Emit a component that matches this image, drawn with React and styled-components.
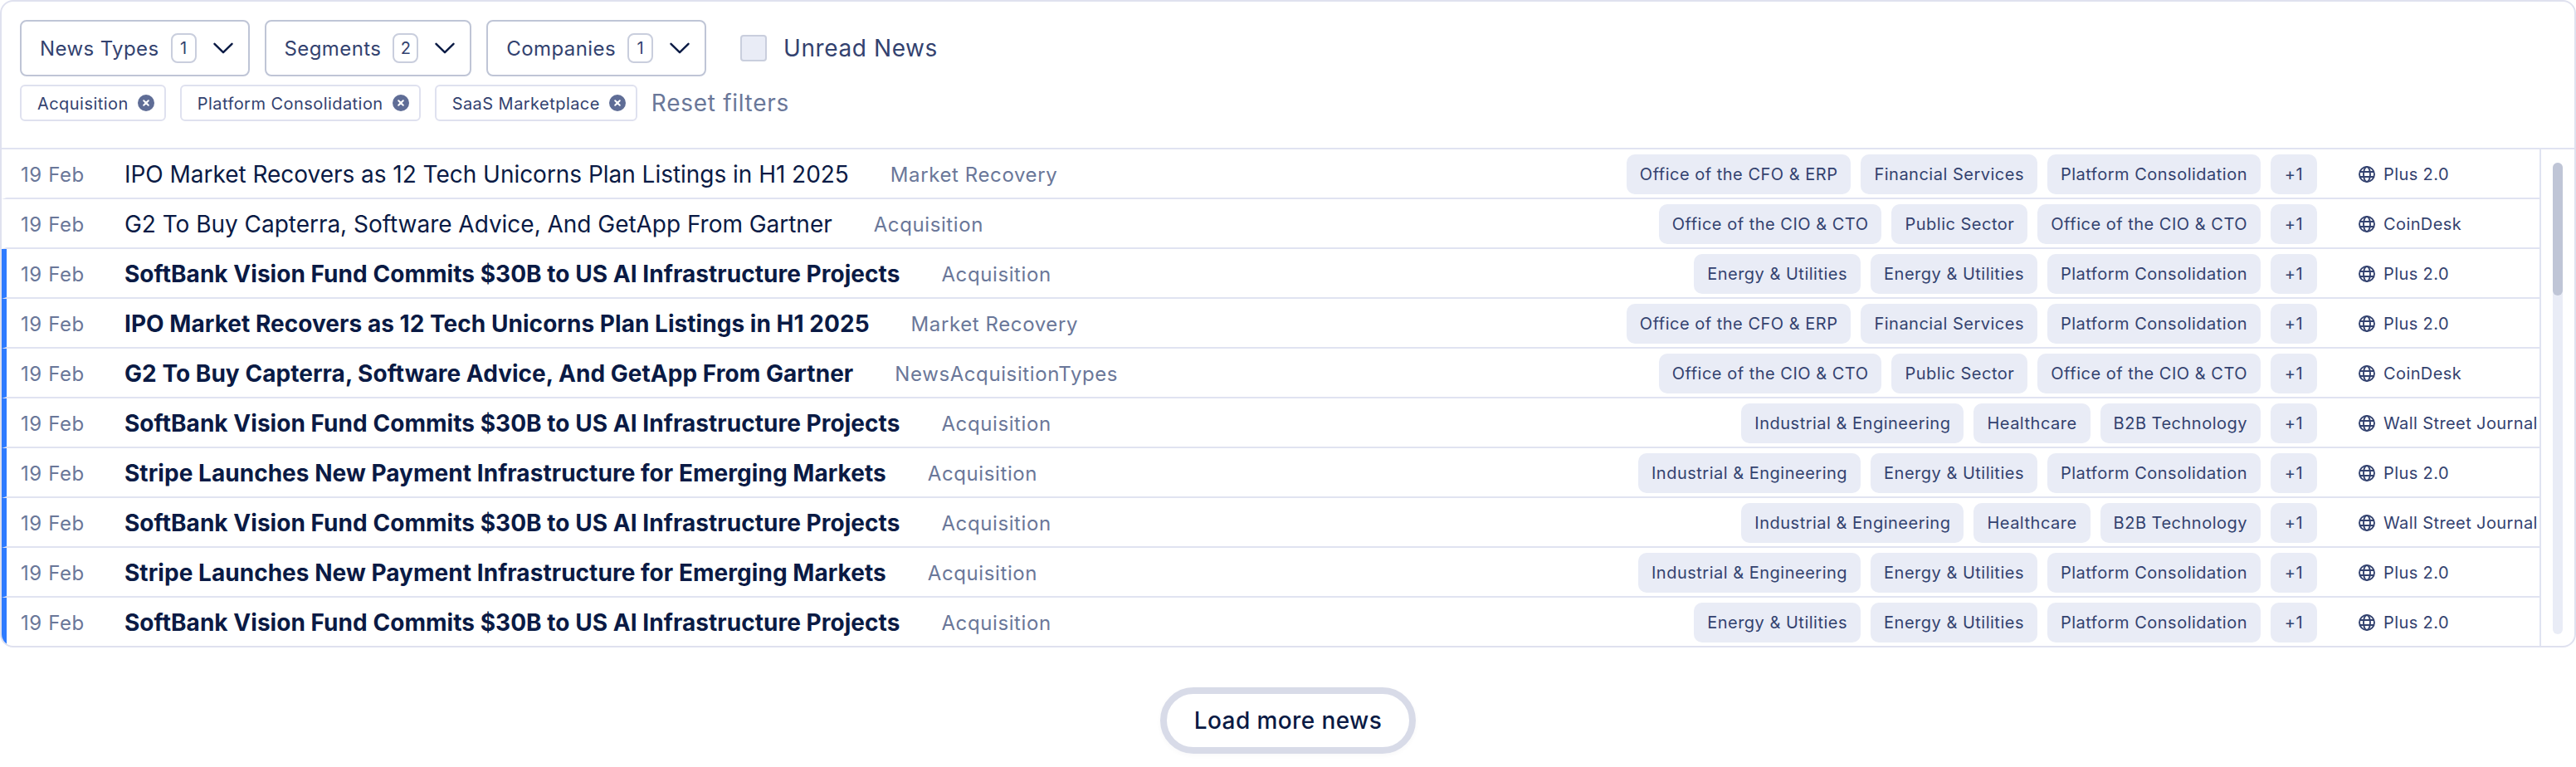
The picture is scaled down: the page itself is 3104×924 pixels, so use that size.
import styled, { createGlobalStyle } from "styled-components";

const GlobalStyle = createGlobalStyle`
  html, body { margin: 0; padding: 0; background: #fff; }
  body { font-family: Inter, "Noto Sans", sans-serif; }
  * { box-sizing: border-box; }
`;

const filters = [
  { label: "News Types", count: 1 },
  { label: "Segments", count: 2 },
  { label: "Companies", count: 1 },
];

const chips = ["Acquisition", "Platform Consolidation", "SaaS Marketplace"];

const softbankEnergy = ["Energy & Utilities", "Energy & Utilities", "Platform Consolidation"];
const softbankIndustrial = ["Industrial & Engineering", "Healthcare", "B2B Technology"];
const stripeTags = ["Industrial & Engineering", "Energy & Utilities", "Platform Consolidation"];
const ipoTags = ["Office of the CFO & ERP", "Financial Services", "Platform Consolidation"];
const g2Tags = ["Office of the CIO & CTO", "Public Sector", "Office of the CIO & CTO"];

const IPO = "IPO Market Recovers as 12 Tech Unicorns Plan Listings in H1 2025";
const G2 = "G2 To Buy Capterra, Software Advice, And GetApp From Gartner";
const SOFTBANK = "SoftBank Vision Fund Commits $30B to US AI Infrastructure Projects";
const STRIPE = "Stripe Launches New Payment Infrastructure for Emerging Markets";

const news = [
  { title: IPO, type: "Market Recovery", tags: ipoTags, source: "Plus 2.0" },
  { title: G2, type: "Acquisition", tags: g2Tags, source: "CoinDesk" },
  { title: SOFTBANK, type: "Acquisition", tags: softbankEnergy, source: "Plus 2.0", unread: true },
  { title: IPO, type: "Market Recovery", tags: ipoTags, source: "Plus 2.0", unread: true },
  { title: G2, type: "NewsAcquisitionTypes", tags: g2Tags, source: "CoinDesk", unread: true },
  { title: SOFTBANK, type: "Acquisition", tags: softbankIndustrial, source: "Wall Street Journal", unread: true },
  { title: STRIPE, type: "Acquisition", tags: stripeTags, source: "Plus 2.0", unread: true },
  { title: SOFTBANK, type: "Acquisition", tags: softbankIndustrial, source: "Wall Street Journal", unread: true },
  { title: STRIPE, type: "Acquisition", tags: stripeTags, source: "Plus 2.0", unread: true },
  { title: SOFTBANK, type: "Acquisition", tags: softbankEnergy, source: "Plus 2.0", unread: true },
];

const Chevron = () => (
  <svg width="24" height="24" viewBox="0 0 24 24" fill="none" stroke="#0a1a44" strokeWidth="2.4" strokeLinecap="round" strokeLinejoin="round">
    <path d="M1.5 6.8L12 17.2L22.5 6.8" />
  </svg>
);

const CloseDot = () => (
  <svg width="20" height="20" viewBox="0 0 20 20">
    <circle cx="10" cy="10" r="10" fill="#5f6d96" />
    <path d="M7.2 7.2l5.6 5.6M12.8 7.2l-5.6 5.6" stroke="#fff" strokeWidth="2" strokeLinecap="round" />
  </svg>
);

const Globe = () => (
  <svg width="20" height="20" viewBox="0 0 20 20" fill="none" stroke="#33426f" strokeWidth="1.9">
    <circle cx="10" cy="10" r="9" />
    <ellipse cx="10" cy="10" rx="4" ry="9" />
    <path d="M1.6 7h16.8M1.6 13h16.8" />
  </svg>
);

const App = () => {
  return (
    <Page>
      <GlobalStyle />
      <Card>
        <FilterBar>
          <FilterRow>
            {filters.map((f) => (
              <FilterButton key={f.label}>
                <span>{f.label}</span>
                <Count>{f.count}</Count>
                <Chevron />
              </FilterButton>
            ))}
            <UnreadToggle>
              <CheckBox />
              <span>Unread News</span>
            </UnreadToggle>
          </FilterRow>
          <ChipRow>
            {chips.map((c) => (
              <Chip key={c}>
                <span>{c}</span>
                <CloseDot />
              </Chip>
            ))}
            <ResetLink>Reset filters</ResetLink>
          </ChipRow>
        </FilterBar>
        <ListWrap>
          <List>
            {news.map((n, i) => (
              <Row key={i} $unread={n.unread}>
                <DateCell>19 Feb</DateCell>
                <Title $unread={n.unread}>{n.title}</Title>
                <NewsType>{n.type}</NewsType>
                <Tags>
                  {n.tags.map((t, j) => (
                    <Tag key={j}>{t}</Tag>
                  ))}
                  <MoreTag>+1</MoreTag>
                </Tags>
                <Source>
                  <Globe />
                  <SourceName>{n.source}</SourceName>
                </Source>
              </Row>
            ))}
          </List>
          <ScrollColumn>
            <ScrollTrack>
              <ScrollThumb />
            </ScrollTrack>
          </ScrollColumn>
        </ListWrap>
      </Card>
      <LoadMoreWrap>
        <LoadMore>Load more news</LoadMore>
      </LoadMoreWrap>
    </Page>
  );
};

export default App;

const Page = styled.div`
  width: 3104px;
  height: 924px;
  overflow: hidden;
`;

const Card = styled.div`
  height: 780px;
  border: 2px solid #dfe1ef;
  border-radius: 16px;
  overflow: hidden;
  display: flex;
  flex-direction: column;
`;

const FilterBar = styled.div`
  height: 178px;
  flex-shrink: 0;
  border-bottom: 2px solid #e0e3f1;
  padding: 22px 22px 0;
`;

const FilterRow = styled.div`
  display: flex;
  align-items: center;
  gap: 18px;
`;

const FilterButton = styled.div`
  height: 68px;
  display: flex;
  align-items: center;
  padding: 0 18px 0 22px;
  border: 2px solid #bfc5d6;
  border-radius: 8px;
  color: #33426f;
  font-size: 24px;
  letter-spacing: 0.4px;
  svg { margin-left: 20px; }
`;

const Count = styled.span`
  width: 31px;
  height: 36px;
  margin-left: 14px;
  display: flex;
  align-items: center;
  justify-content: center;
  border: 2px solid #c9cedd;
  border-radius: 8px;
  font-size: 20px;
  letter-spacing: 0;
`;

const UnreadToggle = styled.label`
  display: flex;
  align-items: center;
  gap: 20px;
  margin-left: 23px;
  color: #33426f;
  font-size: 28px;
  letter-spacing: 0.6px;
`;

const CheckBox = styled.span`
  width: 32px;
  height: 32px;
  background: #e9ecf6;
  border: 2px solid #c9cedd;
  border-radius: 4px;
`;

const ChipRow = styled.div`
  display: flex;
  align-items: center;
  gap: 17px;
  margin-top: 10px;
`;

const Chip = styled.div`
  height: 44px;
  display: flex;
  align-items: center;
  gap: 11px;
  padding: 2px 12px 0 19px;
  border: 2px solid #dfe1ef;
  border-radius: 6px;
  color: #33426f;
  font-size: 20px;
  letter-spacing: 0.45px;
  svg { margin-top: -2px; }
`;

const ResetLink = styled.span`
  color: #6a7799;
  font-size: 28px;
  letter-spacing: 0.7px;
`;

const ListWrap = styled.div`
  flex: 1;
  display: flex;
  min-height: 0;
`;

const List = styled.div`
  width: 3058px;
  flex-shrink: 0;
`;

const Row = styled.div`
  height: 60px;
  display: flex;
  align-items: center;
  padding: 2px 0 0 17px;
  border-left: 6px solid ${(p) => (p.$unread ? "#2e7bff" : "transparent")};
  border-bottom: 2px solid #e0e3f1;
  &:last-child { border-bottom: 0; height: 58px; }
`;

const DateCell = styled.span`
  width: 125px;
  flex-shrink: 0;
  color: #6a7799;
  font-size: 24px;
  letter-spacing: 0.6px;
`;

const Title = styled.span`
  color: #0a1a44;
  font-size: 28px;
  font-weight: ${(p) => (p.$unread ? 700 : 400)};
  letter-spacing: ${(p) => (p.$unread ? "0.04px" : "-0.03px")};
  white-space: nowrap;
`;

const NewsType = styled.span`
  margin-left: 50px;
  color: #6a7799;
  font-size: 24px;
  letter-spacing: 0.6px;
  white-space: nowrap;
`;

const Tags = styled.div`
  margin-left: auto;
  display: flex;
  gap: 12px;
`;

const Tag = styled.span`
  height: 48px;
  display: flex;
  align-items: center;
  padding: 0 16px;
  background: #e9ecf6;
  border-radius: 10px;
  color: #33426f;
  font-size: 20px;
  letter-spacing: 0.5px;
  white-space: nowrap;
`;

const MoreTag = styled(Tag)`
  min-width: 56px;
  justify-content: center;
`;

const Source = styled.div`
  width: 218px;
  flex-shrink: 0;
  margin-left: 50px;
  display: flex;
  align-items: center;
  gap: 10px;
  overflow: hidden;
  svg { flex-shrink: 0; }
`;

const SourceName = styled.span`
  color: #33426f;
  font-size: 20px;
  letter-spacing: 0.4px;
  white-space: nowrap;
`;

const ScrollColumn = styled.div`
  flex: 1;
  border-left: 2px solid #e0e3f1;
  padding: 16px 14px 14px;
`;

const ScrollTrack = styled.div`
  width: 12px;
  height: 100%;
  background: #e9ecf6;
  border-radius: 6px;
`;

const ScrollThumb = styled.div`
  width: 12px;
  height: 160px;
  background: #bfc5d6;
  border-radius: 6px;
`;

const LoadMoreWrap = styled.div`
  display: flex;
  justify-content: center;
  padding-top: 48px;
`;

const LoadMore = styled.button`
  width: 308px;
  height: 80px;
  background: #fff;
  border: 8px solid #d8dbe8;
  border-radius: 40px;
  box-shadow: 0 2px 6px rgba(16, 24, 64, 0.03);
  color: #0a1a44;
  font-family: inherit;
  font-size: 28px;
  font-weight: 500;
  letter-spacing: 0.4px;
`;
